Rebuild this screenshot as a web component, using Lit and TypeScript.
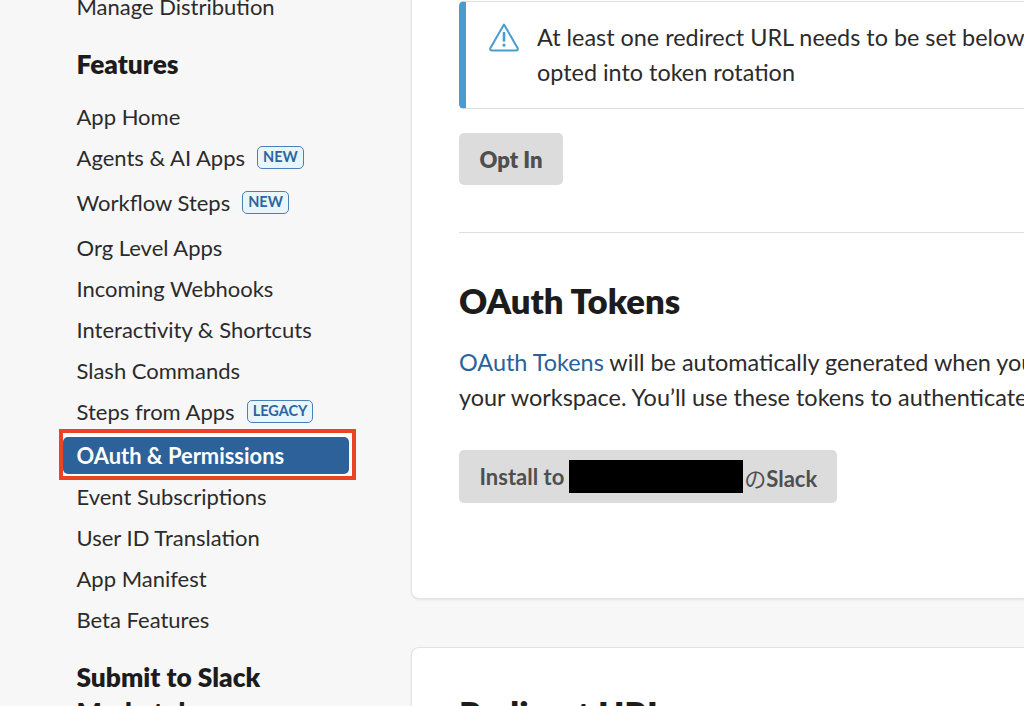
import { LitElement, html, css } from "lit";
import { customElement } from "lit/decorators.js";

interface Item { label: string; badge?: string; tall?: boolean; active?: boolean }

const ITEMS: Item[] = [
  { label: "App Home" },
  { label: "Agents & AI Apps", badge: "NEW" },
  { label: "Workflow Steps", badge: "NEW", tall: true },
  { label: "Org Level Apps" },
  { label: "Incoming Webhooks" },
  { label: "Interactivity & Shortcuts" },
  { label: "Slash Commands" },
  { label: "Steps from Apps", badge: "LEGACY" },
  { label: "OAuth & Permissions", active: true },
  { label: "Event Subscriptions" },
  { label: "User ID Translation" },
  { label: "App Manifest" },
  { label: "Beta Features" },
];

@customElement("app-root")
export class AppRoot extends LitElement {
  static styles = css`
    :host {
      display: block;
      height: 706px;
      overflow: hidden;
      background: #f7f7f7;
      font-family: Lato, "Noto Sans CJK JP", sans-serif;
      color: #1d1c1d;
    }
    .page { display: grid; grid-template-columns: 411px 1fr; height: 706px; overflow: hidden; }

    .side { padding: 0 0 0 76.5px; margin-top: -14px; font-size: 22px; }
    .row { height: 41px; display: flex; align-items: center; gap: 12px; white-space: nowrap; color: #2c2b2c; }
    .row.tall { height: 49px; }
    .head { font-size: 26.3px; font-weight: 800; color: #1d1c1d; line-height: 35px; white-space: nowrap; }
    .head.first { margin-top: 20px; margin-bottom: 14px; }
    .head.last { margin-top: 20px; }
    .badge {
      font-size: 14.5px; font-weight: 700; color: #2d659f; background: #e8f5fa;
      border: 1.5px solid #4b7fb8; border-radius: 5px; height: 23px; line-height: 20px;
      padding: 0 5px; box-sizing: border-box;
    }
    .frame {
      border: 4px solid #ea4425; background: #fff; margin-left: -18px; width: 297px; height: 51px;
      box-sizing: border-box; padding: 4px 3px 2px 0; margin-top: -3.5px; margin-bottom: -4px;
    }
    .pill {
      height: 37px; background: #2c6199; border-radius: 5px; color: #fff; padding-left: 14px; font-size: 21.9px;
      display: flex; align-items: center; white-space: nowrap; font-weight: 700;
    }

    .main { display: flex; flex-direction: column; min-width: 0; }
    .card {
      background: #fff; border: 1px solid #e3e3e3; border-right: none; border-radius: 8px 0 0 8px;
      box-shadow: 0 1px 2px rgba(0,0,0,.08); padding: 0 0 0 47px; box-sizing: border-box; overflow: hidden;
      flex: none;
    }
    .card.one { margin-top: -20px; height: 619px; border-top-left-radius: 0; padding-top: 20px; }
    .card.two { margin-top: 48px; height: 120px; padding-top: 44px; }
    .alert {
      height: 108px; box-sizing: border-box; border: 1px solid #e0e0e0; border-left: 7px solid #4a9bd0;
      border-right: none; border-radius: 5px 0 0 5px; display: flex; gap: 18px; padding: 18px 0 0 23px;
      font-size: 23.4px; line-height: 35px; white-space: nowrap; color: #2c2b2c;
    }
    .alert svg { flex: none; margin-top: 3px; }
    .btn {
      display: inline-flex; align-items: center; background: #dcdcdc; color: #4f4f4f; border-radius: 5px;
      font-weight: 800; font-size: 22px; box-sizing: border-box; white-space: nowrap;
    }
    .opt { margin-top: 24px; width: 104px; height: 52px; justify-content: center; }
    hr { border: none; border-top: 1px solid #dedede; margin: 47px 0 0; }
    h2 { margin: 46px 0 0; font-size: 34.7px; line-height: 44px; font-weight: 800; color: #1d1c1d; white-space: nowrap; }
    p { margin: 22px 0 0; font-size: 23.45px; line-height: 35px; white-space: nowrap; color: #2c2b2c; }
    a { color: #2c6199; text-decoration: none; }
    .install { margin-top: 35px; width: 378px; height: 53px; padding-left: 20.5px; font-weight: 700; }
    .redact { width: 174px; height: 33px; background: #000; margin: 0 1px 0 5px; flex: none; }
    .no { font-weight: 400; }
    .card.two h2 { margin: 0; }
  `;

  render() {
    return html`
      <div class="page">
        <nav class="side">
          <div class="row">Manage Distribution</div>
          <div class="head first">Features</div>
          ${ITEMS.map((i) =>
            i.active
              ? html`<div class="frame"><div class="pill">${i.label}</div></div>`
              : html`<div class="row ${i.tall ? "tall" : ""}">
                  <span>${i.label}</span>
                  ${i.badge ? html`<span class="badge">${i.badge}</span>` : ""}
                </div>`
          )}
          <div class="head last">Submit to Slack<br />Marketplace</div>
        </nav>
        <main class="main">
          <section class="card one">
            <div class="alert">
              <svg width="30" height="29" viewBox="0 0 30 29" fill="none" stroke="#4a9bd0" stroke-width="2" stroke-linejoin="round" stroke-linecap="round">
                <path d="M15 1.5 L28.6 25 Q29.4 27.5 27 27.5 L3 27.5 Q0.6 27.5 1.4 25 Z" />
                <path d="M15 10 V17.5" stroke-width="2.6" />
                <path d="M15 22 V22.3" stroke-width="3" />
              </svg>
              <div>At least one redirect URL needs to be set below before this app can be<br />opted into token rotation</div>
            </div>
            <div class="btn opt">Opt In</div>
            <hr />
            <h2>OAuth Tokens</h2>
            <p><a>OAuth Tokens</a> will be automatically generated when you finish connecting<br />your workspace. You’ll use these tokens to authenticate your app.</p>
            <div class="btn install">Install to <span class="redact"></span><span><span class="no">の</span>Slack</span></div>
          </section>
          <section class="card two">
            <h2>Redirect URLs</h2>
          </section>
        </main>
      </div>
    `;
  }
}
